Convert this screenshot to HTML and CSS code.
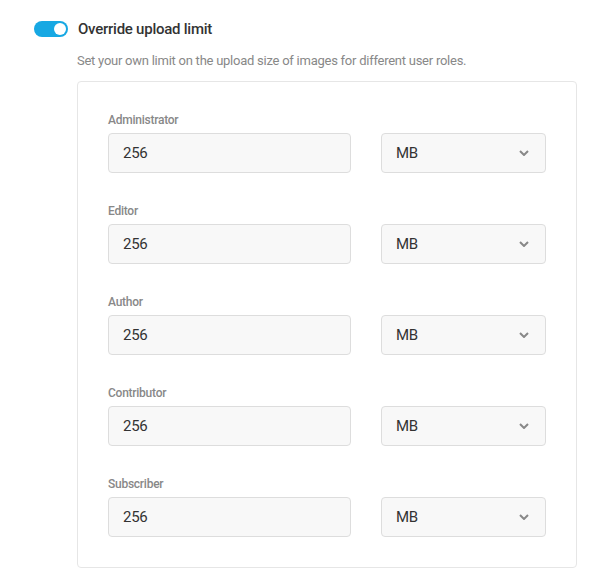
FILE: index.html
```html
<!DOCTYPE html>
<html>
<head>
<meta charset="utf-8">
<link rel="stylesheet" href="styles.css">
</head>
<body>
<div class="setting">
  <div class="toggle-row">
    <span class="toggle"><span class="knob"></span></span>
    <span class="title">Override upload limit</span>
  </div>
  <div class="content">
    <p class="desc">Set your own limit on the upload size of images for different user roles.</p>
    <div class="box">
      <div class="row">
        <label class="label">Administrator</label>
        <div class="fields">
          <div class="input">256</div>
          <div class="select">MB<svg class="chev" width="10" height="6" viewBox="0 0 10 6"><path d="M1 1l4 4 4-4" fill="none" stroke="#888" stroke-width="2"/></svg></div>
        </div>
      </div>
      <div class="row">
        <label class="label">Editor</label>
        <div class="fields">
          <div class="input">256</div>
          <div class="select">MB<svg class="chev" width="10" height="6" viewBox="0 0 10 6"><path d="M1 1l4 4 4-4" fill="none" stroke="#888" stroke-width="2"/></svg></div>
        </div>
      </div>
      <div class="row">
        <label class="label">Author</label>
        <div class="fields">
          <div class="input">256</div>
          <div class="select">MB<svg class="chev" width="10" height="6" viewBox="0 0 10 6"><path d="M1 1l4 4 4-4" fill="none" stroke="#888" stroke-width="2"/></svg></div>
        </div>
      </div>
      <div class="row">
        <label class="label">Contributor</label>
        <div class="fields">
          <div class="input">256</div>
          <div class="select">MB<svg class="chev" width="10" height="6" viewBox="0 0 10 6"><path d="M1 1l4 4 4-4" fill="none" stroke="#888" stroke-width="2"/></svg></div>
        </div>
      </div>
      <div class="row">
        <label class="label">Subscriber</label>
        <div class="fields">
          <div class="input">256</div>
          <div class="select">MB<svg class="chev" width="10" height="6" viewBox="0 0 10 6"><path d="M1 1l4 4 4-4" fill="none" stroke="#888" stroke-width="2"/></svg></div>
        </div>
      </div>
    </div>
  </div>
</div>
</body>
</html>
```
FILE: styles.css
```css
* { box-sizing: border-box; }
body {
  margin: 0;
  background: #fff;
  font-family: Roboto, "Liberation Sans", sans-serif;
  color: #333;
  letter-spacing: -0.25px;
}
.setting {
  padding: 20px 0 0 34px;
}
.toggle-row {
  display: flex;
  align-items: center;
  height: 18px;
}
.toggle {
  position: relative;
  width: 34px;
  height: 16px;
  border-radius: 8px;
  background: #17a8e3;
  margin-right: 10px;
}
.knob {
  position: absolute;
  right: 2px;
  top: 2px;
  width: 12px;
  height: 12px;
  border-radius: 50%;
  background: #fff;
}
.title {
  font-size: 15px;
  font-weight: 500;
  color: #333;
  line-height: 18px;
}
.content {
  padding-left: 43px;
}
.desc {
  margin: 13px 0 10px;
  font-size: 13px;
  line-height: 20px;
  color: #888;
}
.box {
  width: 500px;
  border: 1px solid #e6e6e6;
  border-radius: 4px;
  padding: 30px;
  display: flex;
  flex-direction: column;
  gap: 30px;
}
.label {
  display: block;
  font-size: 12px;
  font-weight: 500;
  line-height: 16px;
  color: #888;
  margin-bottom: 5px;
}
.fields {
  display: flex;
  gap: 30px;
}
.input, .select {
  height: 40px;
  border: 1px solid #ddd;
  border-radius: 4px;
  background: #f8f8f8;
  font-size: 15px;
  color: #333;
  display: flex;
  align-items: center;
  padding: 0 14px;
}
.input { width: 243px; }
.select {
  width: 165px;
  justify-content: space-between;
  padding-right: 16px;
}
.chev { display: block; }
```
